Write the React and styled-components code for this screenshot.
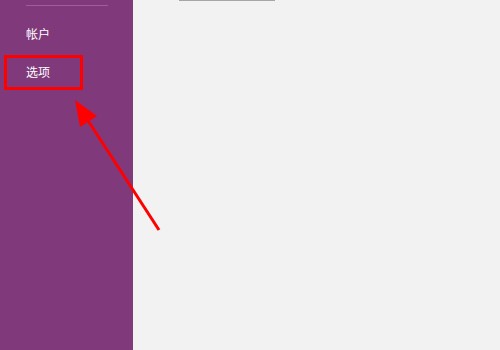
import React from "react";
import styled, { createGlobalStyle } from "styled-components";

const Global = createGlobalStyle`
  html, body { margin: 0; padding: 0; background: #f2f2f2; }
  body { font-family: "Noto Sans CJK SC", "Noto Sans", sans-serif; }
`;

const Page = styled.div`
  position: relative;
  width: 500px;
  height: 350px;
  display: flex;
  overflow: hidden;
  background: #f2f2f2;
`;

const Sidebar = styled.nav`
  width: 133px;
  flex: none;
  background: #80397b;
  display: flex;
  flex-direction: column;
  padding-top: 5px;
  box-sizing: border-box;
`;

const Divider = styled.div`
  height: 1px;
  margin: 0 25px 0 26px;
  background: #9c5f98;
`;

const NavList = styled.ul`
  list-style: none;
  margin: 9px 0 0;
  padding: 0;
  display: flex;
  flex-direction: column;
`;

const NavItem = styled.li`
  position: relative;
  height: 38px;
  display: flex;
  align-items: center;
  padding-left: 26px;
  color: #ffffff;
  font-size: 12px;
  line-height: 1;
`;

const Highlight = styled.span`
  position: absolute;
  left: 4px;
  top: 2px;
  width: 73px;
  height: 29px;
  border: 3px solid #ff0000;
`;

const Main = styled.main`
  flex: 1;
  background: #f2f2f2;
  padding-left: 46px;
`;

const TopRule = styled.div`
  width: 96px;
  height: 1px;
  background: #a6a6a6;
`;

const Annotation = styled.svg`
  position: absolute;
  left: 0;
  top: 0;
  pointer-events: none;
`;

export default function App() {
  return (
    <>
      <Global />
      <Page>
        <Sidebar>
          <Divider />
          <NavList>
            <NavItem>帐户</NavItem>
            <NavItem>
              选项
              <Highlight />
            </NavItem>
          </NavList>
        </Sidebar>
        <Main>
          <TopRule />
        </Main>
        <Annotation width="500" height="350" viewBox="0 0 500 350">
          <line x1="159" y1="230" x2="87" y2="119" stroke="#ff0000" strokeWidth="3" />
          <polygon points="75,100 80,127 97,116" fill="#ff0000" />
        </Annotation>
      </Page>
    </>
  );
}
